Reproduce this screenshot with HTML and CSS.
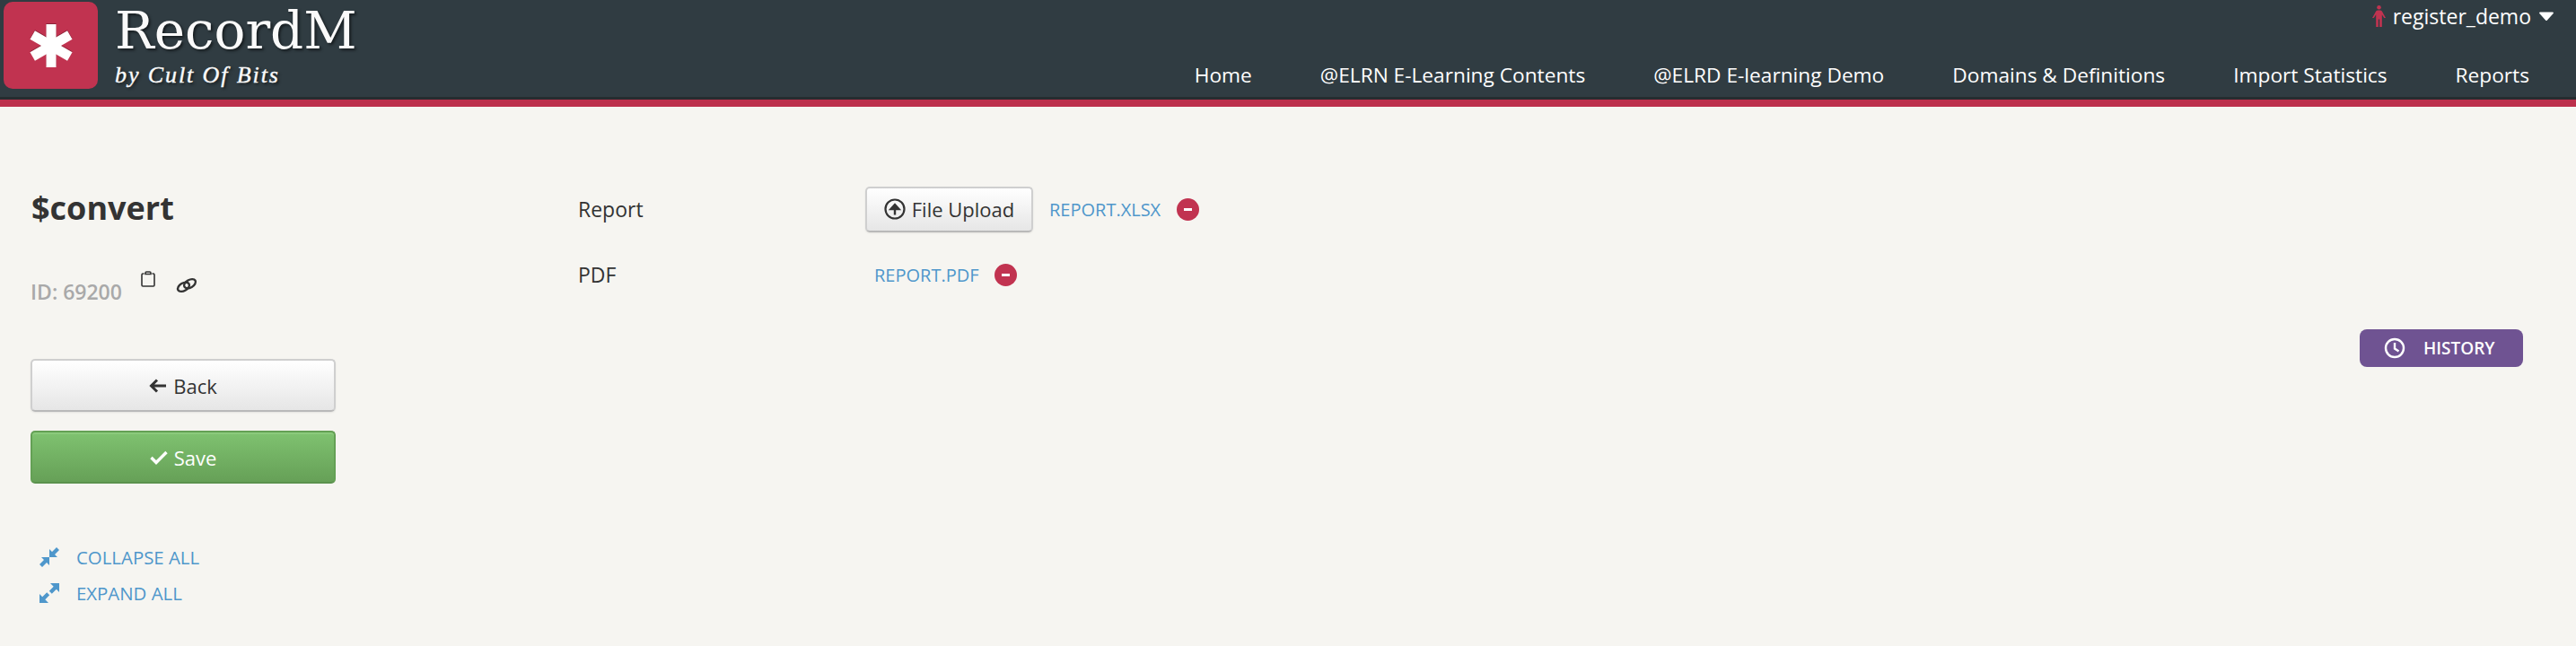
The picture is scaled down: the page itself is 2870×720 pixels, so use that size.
FILE: index.html
```html
<!DOCTYPE html>
<html lang="en">
<head>
<meta charset="utf-8">
<title>RecordM</title>
<link rel="stylesheet" href="styles.css">
</head>
<body>
<header class="topbar">
  <div class="brand">
    <div class="logo">
      <svg class="logo-star" viewBox="0 0 50 50" width="50" height="50"><g fill="#fff"><rect x="19.500" y="1" width="11" height="48"/><rect x="19.500" y="1" width="11" height="48" transform="rotate(60 25 25)"/><rect x="19.500" y="1" width="11" height="48" transform="rotate(120 25 25)"/></g></svg>
    </div>
    <div class="brand-text">
      <div class="brand-name">RecordM</div>
      <div class="brand-sub">by Cult Of Bits</div>
    </div>
  </div>
  <div class="topbar-right">
    <div class="user">
      <svg class="user-icon" viewBox="0 0 15 24" width="15" height="24"><g fill="#c13350"><circle cx="7.500" cy="2.300" r="2.300"/><path d="M7.500 5.500c2.500 0 3.500.6 4 2.200L15 14h-1.800l-2.400-3.800V24H8.200V15.500H6.800V24H4.200V10.200L1.800 14H0l3.500-6.300c.5-1.600 1.500-2.200 4-2.200z"/></g></svg>
      <span>register_demo</span>
      <svg class="caret" viewBox="0 0 16 12" width="16" height="12"><path d="M1 1.500h14a1 1 0 0 1 .7 1.600L8.700 10.700a1 1 0 0 1-1.400 0L.3 3.100A1 1 0 0 1 1 1.500z" fill="#fff"/></svg>
    </div>
    <nav class="nav">
      <a>Home</a>
      <a>@ELRN E-Learning Contents</a>
      <a>@ELRD E-learning Demo</a>
      <a>Domains &amp; Definitions</a>
      <a>Import Statistics</a>
      <a>Reports</a>
    </nav>
  </div>
</header>
<main class="page">
  <aside class="side">
    <h1 class="title">$convert</h1>
    <div class="idline">
      <span class="id">ID: 69200</span>
      <svg class="clip" viewBox="0 0 16 18" width="16" height="18"><path d="M3.500 3H2.200C1.500 3 1 3.500 1 4.200v11.600C1 16.500 1.500 17 2.200 17h11.600c.7 0 1.200-.5 1.200-1.200V4.200C15 3.500 14.500 3 13.800 3h-1.300M5 3.500V2.200C5 1.500 5.500 1 6.200 1h3.600c.7 0 1.200.5 1.200 1.200v1.300z" fill="none" stroke="#333" stroke-width="1.600"/></svg>
      <svg class="chain" viewBox="0 0 24 18" width="24" height="18"><g fill="none" stroke="#333" stroke-width="2.400"><ellipse cx="8.500" cy="10.800" rx="7" ry="4.300" transform="rotate(-30 8.500 10.800)"/><ellipse cx="15.500" cy="7.200" rx="7" ry="4.300" transform="rotate(-30 15.500 7.200)"/></g></svg>
    </div>
    <button class="btn btn-wide">
      <svg viewBox="0 0 20 16" width="20" height="16"><path d="M19 8H3M9 1.500 2.500 8 9 14.500" fill="none" stroke="#333" stroke-width="3"/></svg>
      Back
    </button>
    <button class="btn btn-wide btn-save">
      <svg viewBox="0 0 20 16" width="20" height="16"><path d="M1.500 8 7 13.500 18.500 2" fill="none" stroke="#fff" stroke-width="3.400"/></svg>
      Save
    </button>
    <ul class="tools">
      <li>
        <svg viewBox="0 0 22 22" width="22" height="22"><g fill="#4f97cb"><path d="M2 11h9v9l-3-3-5 5-3-3 5-5z"/><path d="M20 11h-9V2l3 3 5-5 3 3-5 5z"/></g></svg>
        <a>COLLAPSE ALL</a>
      </li>
      <li>
        <svg viewBox="0 0 22 22" width="22" height="22"><g fill="#4f97cb"><path d="M12 0h10v10l-3.200-3.200-5 5-3-3 4.900-5z"/><path d="M10 22H0V12l3.200 3.200 5-5 3 3-4.900 5z"/></g></svg>
        <a>EXPAND ALL</a>
      </li>
    </ul>
  </aside>
  <section class="form">
    <div class="row row-report">
      <div class="label">Report</div>
      <div class="value">
        <button class="btn btn-upload">
          <svg viewBox="0 0 24 24" width="24" height="24"><circle cx="12" cy="12" r="10.500" fill="none" stroke="#333" stroke-width="2.200"/><path d="M12 18.500V10M7.500 12 12 7l4.500 5z" fill="#333" stroke="#333" stroke-width="2.400"/></svg>
          File Upload
        </button>
        <a class="file">REPORT.XLSX</a>
        <span class="remove"></span>
      </div>
    </div>
    <div class="row row-pdf">
      <div class="label">PDF</div>
      <div class="value value-pdf">
        <a class="file">REPORT.PDF</a>
        <span class="remove"></span>
      </div>
    </div>
    <div class="history-row">
      <button class="history">
        <svg viewBox="0 0 24 24" width="24" height="24"><circle cx="12" cy="12" r="10" fill="none" stroke="#fff" stroke-width="2.400"/><path d="M12 6v6.500l4.500 3" fill="none" stroke="#fff" stroke-width="2.400"/></svg>
        HISTORY
      </button>
    </div>
  </section>
</main>
</body>
</html>
```
FILE: styles.css
```css
* { box-sizing: border-box; }
html, body { margin: 0; padding: 0; }
body {
  height: 720px;
  overflow: hidden;
  background: #f6f5f1;
  color: #333;
  font-family: "Open Sans", "Noto Sans", sans-serif;
}
.topbar {
  height: 119px;
  display: flex;
  justify-content: space-between;
  background: #303c42;
  border-bottom: 8px solid #bc304c;
  box-shadow: inset 0 -3px 0 #262c2f;
}
.brand { display: flex; padding: 2px 0 0 4px; }
.logo {
  width: 105px;
  height: 97px;
  border-radius: 10px;
  background: #c13350;
  display: flex;
  align-items: center;
  justify-content: center;
}
.logo-star { display: block; filter: drop-shadow(0 -1px 0 #8e2238); }
.brand-text { margin-left: 19px; }
.brand-name {
  font: 58px/64px "DejaVu Serif", serif;
  color: #fafafa;
  text-shadow: 2px 2px 3px #161c1f;
}
.brand-sub {
  margin-top: 4px;
  font: italic 400 26px/28px "Liberation Serif", serif;
  letter-spacing: 1.900px;
  -webkit-text-stroke: .4px #fafafa;
  color: #fafafa;
  text-shadow: 2px 2px 3px #161c1f;
}
.topbar-right {
  display: flex;
  flex-direction: column;
  align-items: flex-end;
  padding-right: 52px;
}
.user {
  height: 36px;
  margin-right: -27px;
  display: flex;
  align-items: center;
  gap: 8px;
  color: #fff;
  font-size: 23px;
  font-weight: 500;
  white-space: nowrap;
}
.caret { margin-left: 1px; }
.nav {
  margin-top: 32px;
  display: flex;
  gap: 76px;
  font-size: 22.700px;
  font-weight: 500;
  line-height: 32px;
  color: #fff;
  white-space: nowrap;
}
.page { display: flex; }
.side {
  flex: none;
  width: 644px;
  padding: 88px 0 0 35px;
}
.title {
  margin: 0;
  font-size: 36px;
  line-height: 50px;
  font-weight: 700;
  color: #333;
}
.idline {
  margin: 35px 0 0 -1px;
  height: 46px;
  display: flex;
  align-items: flex-start;
}
.id {
  margin-top: 18px;
  font-size: 23px;
  line-height: 30px;
  font-weight: 600;
  color: #a9a9a9;
}
.clip { margin: 10px 0 0 21px; }
.chain { margin: 17px 0 0 23px; }
.btn {
  font-family: inherit;
  color: #333;
  background: linear-gradient(#fff, #e6e6e6);
  border: 2px solid #cfcfcf;
  border-bottom-color: #b9b9b9;
  border-radius: 5px;
  display: flex;
  align-items: center;
  justify-content: center;
  gap: 7px;
  padding: 0;
  box-shadow: 0 1px 2px rgba(0,0,0,.08);
}
.btn-wide {
  width: 340px;
  height: 59px;
  font-size: 22px;
  margin: 21px 0 0 -1px;
}
.idline + .btn-wide { margin-top: 62px; }
.btn-save {
  color: #fff;
  background: linear-gradient(#7fc270, #66a057);
  border-color: #64a055;
  border-bottom-color: #5b924e;
  box-shadow: inset 0 2px 0 #8bca7c;
}
.tools {
  list-style: none;
  margin: 0;
  padding: 62px 0 0 9px;
}
.tools li {
  height: 40px;
  display: flex;
  align-items: center;
  gap: 19px;
  color: #4f97cb;
  font-size: 20.400px;
}
.form { flex: 1; padding-top: 89px; padding-right: 59px; }
.row { display: flex; align-items: center; }
.row-report { height: 50px; }
.row-pdf { height: 44px; margin-top: 26px; }
.label {
  width: 320px;
  font-size: 23px;
  line-height: 30px;
  color: #333;
}
.value { display: flex; align-items: center; }
.value-pdf { margin-left: 10px; }
.btn-upload {
  width: 187px;
  height: 51px;
  font-size: 22px;
}
.file {
  margin-left: 18px;
  font-size: 20px;
  color: #4f97cb;
}
.value-pdf .file { margin-left: 0; }
.remove {
  position: relative;
  margin-left: 18px;
  width: 25px;
  height: 25px;
  border-radius: 50%;
  background: #c13350;
}
.value-pdf .remove { margin-left: 17px; }
.remove::after {
  content: "";
  position: absolute;
  left: 8px;
  top: 11px;
  width: 9px;
  height: 3px;
  background: #fff;
}
.history-row {
  display: flex;
  justify-content: flex-end;
  margin-top: 39px;
}
.history {
  width: 182px;
  height: 42px;
  border: 0;
  border-radius: 8px;
  background: #6f5392;
  color: #fff;
  font-family: inherit;
  font-size: 19px;
  font-weight: 600;
  display: flex;
  align-items: center;
  gap: 20px;
  padding: 0 0 0 27px;
}
```
